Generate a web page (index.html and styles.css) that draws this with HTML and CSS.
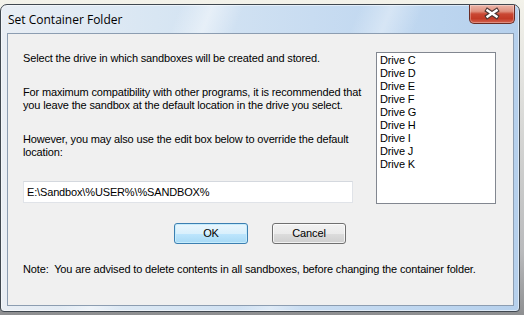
FILE: index.html
```html
<!DOCTYPE html>
<html lang="en">
<head>
    <meta charset="UTF-8">
    <title>Set Container Folder</title>
    <link rel="stylesheet" href="styles.css">
</head>
<body>
    <div class="window">
        <div class="titlebar">
            <div class="title">Set Container Folder</div>
            <div class="close">
                <svg width="46" height="19" viewBox="0 0 46 19">
                    <path d="M18.5 6.5 L27.5 12.5 M27.5 6.5 L18.5 12.5" stroke="#4b3532" stroke-width="4.6" stroke-linecap="square" fill="none"/>
                    <path d="M18.5 6.5 L27.5 12.5 M27.5 6.5 L18.5 12.5" stroke="#ffffff" stroke-width="2.4" stroke-linecap="square" fill="none"/>
                </svg>
            </div>
        </div>

        <div class="client">
            <div class="main">
                <div class="left">
                    <p>Select the drive in which sandboxes will be created and stored.</p>
                    <p>For maximum compatibility with other programs, it is recommended that<br>you leave the sandbox at the default location in the drive you select.</p>
                    <p>However, you may also use the edit box below to override the default<br>location:</p>
                    <div class="edit">E:\Sandbox\%USER%\%SANDBOX%</div>
                </div>
                <ul class="drives">
                    <li>Drive C</li>
                    <li>Drive D</li>
                    <li>Drive E</li>
                    <li>Drive F</li>
                    <li>Drive G</li>
                    <li>Drive H</li>
                    <li>Drive I</li>
                    <li>Drive J</li>
                    <li>Drive K</li>
                </ul>
            </div>

            <div class="buttons">
                <div class="btn default">OK</div>
                <div class="btn">Cancel</div>
            </div>

            <div class="note">Note:&nbsp; You are advised to delete contents in all sandboxes, before changing the container folder.</div>
        </div>
    </div>
</body>
</html>
```

FILE: styles.css
```css
* {
    margin: 0;
    padding: 0;
    box-sizing: border-box;
}

body {
    width: 524px;
    height: 315px;
    overflow: hidden;
    font-family: "Liberation Sans", Arial, sans-serif;
    font-size: 11px;
    letter-spacing: -0.15px;
    color: #000;
    background: linear-gradient(to bottom, #f3f2ea 0, #e6e6e2 20%, #b9babc 80%, #8e8f91 100%);
}

.window {
    margin-top: 4px;
    width: 520px;
    height: 308px;
    border: 1px solid #404850;
    border-radius: 7px 7px 4px 4px;
    display: flex;
    flex-direction: column;
    background:
        linear-gradient(112deg, transparent 28%, rgba(255, 255, 255, 0.45) 33%, transparent 38%, transparent 56%, rgba(255, 255, 255, 0.35) 61%, transparent 66%),
        linear-gradient(90deg, #e9eef4 0%, #d8e6f3 30%, #c8dcf1 60%, #bcd5ef 85%, #b6d0ec 100%);
    box-shadow: inset 0 0 0 1px rgba(255, 255, 255, 0.5);
}

.titlebar {
    display: flex;
    justify-content: space-between;
    align-items: flex-start;
    height: 28px;
    flex-shrink: 0;
}

.title {
    margin: 7px 0 0 7px;
    font-family: "Open Sans", "Noto Sans", sans-serif;
    font-size: 12px;
    line-height: 16px;
    letter-spacing: 0;
    color: #000;
}

.close {
    width: 46px;
    height: 19px;
    margin-right: 4px;
    border: 1px solid #6a2c24;
    border-top: none;
    border-radius: 0 0 5px 5px;
    background: linear-gradient(to bottom, #ebb5a8 0%, #e0917f 35%, #c94733 50%, #c23a26 75%, #d4624f 100%);
    box-shadow: inset 0 0 0 1px rgba(255, 255, 255, 0.3);
}

.close svg {
    display: block;
    margin: -1px 0 0 -1px;
}

.client {
    flex: 1;
    margin: 0 5px 5px 6px;
    border: 1px solid #8c9db1;
    background: #f0f0f0;
    padding: 18px 0 0 15px;
}

.main {
    display: flex;
    align-items: flex-start;
}

.left {
    width: 330px;
}

.left p {
    line-height: 13px;
    margin-bottom: 21px;
    white-space: nowrap;
}

.left p:nth-child(3) {
    margin-bottom: 22px;
}

.edit {
    height: 22px;
    border: 1px solid #e0e3e8;
    border-top-color: #d4d8de;
    background: #fff;
    padding: 4px 0 0 3px;
    line-height: 13px;
}

.drives {
    list-style: none;
    margin-left: 23px;
    width: 120px;
    height: 152px;
    border: 1px solid #828790;
    background: #fff;
    padding: 1px 0 0 3px;
}

.drives li {
    line-height: 13px;
}

.buttons {
    display: flex;
    gap: 24px;
    margin-top: 19px;
    padding-left: 151px;
}

.btn {
    width: 74px;
    height: 21px;
    border: 1px solid #707070;
    border-radius: 3px;
    text-align: center;
    line-height: 19px;
    background: linear-gradient(to bottom, #f2f2f2 0%, #ebebeb 50%, #dddddd 51%, #cfcfcf 100%);
    box-shadow: inset 0 0 0 1px rgba(255, 255, 255, 0.7);
}

.btn.default {
    border-color: #3c7fb1;
    background: linear-gradient(to bottom, #eaf6fd 0%, #d9f0fc 50%, #bee6fd 51%, #a7d9f5 100%);
    box-shadow: inset 0 0 0 1px #c6ecfc;
}

.note {
    margin-top: 19px;
    line-height: 13px;
    white-space: nowrap;
}
```
